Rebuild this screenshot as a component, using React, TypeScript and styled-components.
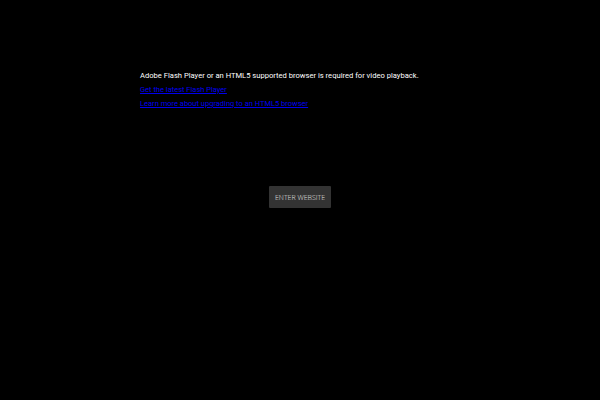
import React from "react";
import styled, { createGlobalStyle } from "styled-components";

const Global = createGlobalStyle`
  html, body { margin: 0; padding: 0; background: #000; }
  body { width: 600px; height: 400px; overflow: hidden; }
`;

const Page = styled.div`
  width: 600px;
  height: 400px;
  background: #000;
  display: flex;
  flex-direction: column;
  box-sizing: border-box;
  padding-top: 71px;
`;

const Notice = styled.div`
  margin-left: 140px;
  display: flex;
  flex-direction: column;
  gap: 4px;
  font-family: Roboto, "Liberation Sans", sans-serif;
`;

const Message = styled.p`
  margin: 0;
  color: #fff;
  font-size: 7.6px;
  line-height: 10px;
`;

const Link = styled.a`
  color: #0000ee;
  font-size: 7.5px;
  line-height: 10px;
  text-decoration: underline;
`;

const Center = styled.div`
  display: flex;
  justify-content: center;
  margin-top: 77px;
`;

const EnterButton = styled.button`
  width: 62px;
  height: 22px;
  padding: 0;
  border: none;
  border-radius: 1px;
  background: #333;
  color: #e2e2e2;
  font-family: "Open Sans", "Liberation Sans", sans-serif;
  font-size: 7px;
  font-weight: 300;
  cursor: pointer;
`;

export default function App() {
  return (
    <>
      <Global />
      <Page>
        <Notice>
          <Message>
            Adobe Flash Player or an HTML5 supported browser is required for video playback.
          </Message>
          <Link href="#">Get the latest Flash Player</Link>
          <Link href="#">Learn more about upgrading to an HTML5 browser</Link>
        </Notice>
        <Center>
          <EnterButton>ENTER WEBSITE</EnterButton>
        </Center>
      </Page>
    </>
  );
}
